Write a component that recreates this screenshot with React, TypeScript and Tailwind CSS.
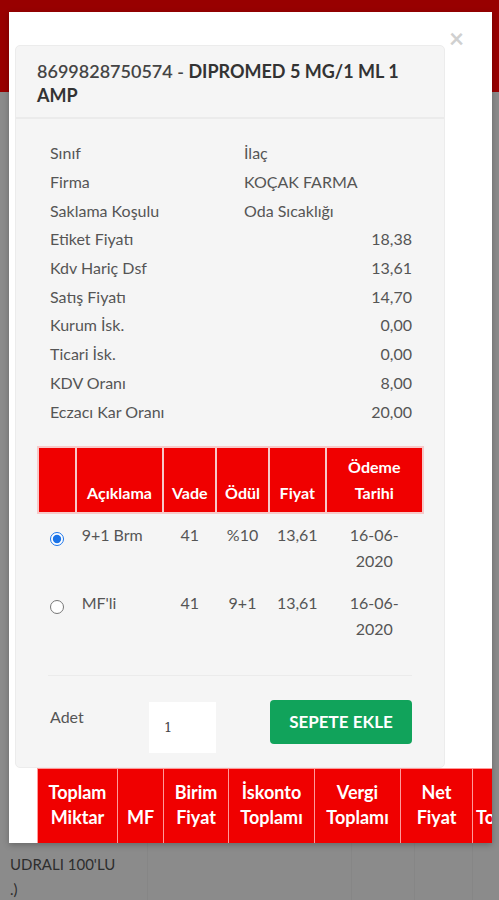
import React from "react";

const info: [string, string, boolean][] = [
  ["Sınıf", "İlaç", false],
  ["Firma", "KOÇAK FARMA", false],
  ["Saklama Koşulu", "Oda Sıcaklığı", false],
  ["Etiket Fiyatı", "18,38", true],
  ["Kdv Hariç Dsf", "13,61", true],
  ["Satış Fiyatı", "14,70", true],
  ["Kurum İsk.", "0,00", true],
  ["Ticari İsk.", "0,00", true],
  ["KDV Oranı", "8,00", true],
  ["Eczacı Kar Oranı", "20,00", true],
];

const campaigns = [
  { id: 1, desc: "9+1 Brm", vade: "41", odul: "%10", fiyat: "13,61", tarih: ["16-06-", "2020"], checked: true },
  { id: 2, desc: "MF'li", vade: "41", odul: "9+1", fiyat: "13,61", tarih: ["16-06-", "2020"], checked: false },
];

const totals: [string, string, number][] = [
  ["Toplam", "Miktar", 80],
  ["", "MF", 46],
  ["Birim", "Fiyat", 65],
  ["İskonto", "Toplamı", 86],
  ["Vergi", "Toplamı", 86],
  ["Net", "Fiyat", 72],
  ["", "Toplam", 0],
];

export default function App() {
  return (
    <div className="relative w-full h-[900px] overflow-hidden bg-[#8b8b8b] font-['Lato',sans-serif]">
      {/* page behind the overlay */}
      <div className="h-[92px] bg-[#980000]" />
      <div className="flex h-[808px]">
        <div className="w-[148px] pl-[10px] pt-[760px] text-[15px] leading-[25px] text-[#2e2e2e] border-r border-[#868686]">
          <div>UDRALI 100'LU</div>
          <div>.)</div>
        </div>
        <div className="w-[204px] border-r border-[#868686]" />
        <div className="w-[63px] border-r border-[#868686]" />
        <div className="w-[58px] border-r border-[#868686]" />
      </div>

      {/* modal */}
      <div className="absolute left-[9px] top-[12px] w-[483px] h-[831px] bg-white overflow-hidden shadow-[0_2px_6px_rgba(0,0,0,0.25)]">
        <button className="absolute right-[28px] top-[13px] text-[26px] leading-none font-bold text-[#d0d0d0]">×</button>

        <div className="pl-[6px] pt-[33px]">
          <div className="w-[430px] bg-[#f5f5f5] border border-[#ececec] rounded-[5px]">
            <div className="px-[21px] pt-[13px] pb-[10px] border-b-2 border-[#ebebeb] text-[18px] leading-[24px] text-[#333]">
              <span className="font-semibold text-[#444]">8699828750574 - </span>
              <span className="font-bold">DIPROMED 5 MG/1 ML 1 AMP</span>
            </div>

            <div className="pt-[20px] px-[21px] pb-[14px]">
              <div className="pl-[13px] pr-[11px] text-[16px] text-[#555]">
                {info.map(([label, value, num]) => (
                  <div key={label} className="flex h-[28.7px] items-center">
                    <div className="w-[194px] shrink-0">{label}</div>
                    <div className={num ? "flex-1 text-right" : "flex-1"}>{value}</div>
                  </div>
                ))}
              </div>

              <table className="mt-[20px] w-[387px] border-collapse text-[16px]">
                <thead>
                  <tr className="bg-[#f00000] text-white font-bold leading-[26px]">
                    <th className="w-[38px] border-2 border-[#f7c9c9]" />
                    <th className="w-[88px] border-2 border-[#f7c9c9] align-bottom pb-[6px] px-1">Açıklama</th>
                    <th className="w-[53px] border-2 border-[#f7c9c9] align-bottom pb-[6px]">Vade</th>
                    <th className="w-[53px] border-2 border-[#f7c9c9] align-bottom pb-[6px]">Ödül</th>
                    <th className="w-[57px] border-2 border-[#f7c9c9] align-bottom pb-[6px]">Fiyat</th>
                    <th className="w-[98px] border-2 border-[#f7c9c9] align-bottom pb-[6px] pt-[6px]">
                      Ödeme
                      <br />
                      Tarihi
                    </th>
                  </tr>
                </thead>
                <tbody className="text-[#555] leading-[26px]">
                  {campaigns.map((c) => (
                    <tr key={c.id}>
                      <td className="align-top pt-[10px] pb-[8px] text-center">
                        <input
                          type="radio"
                          name="kampanya"
                          defaultChecked={c.checked}
                          className="w-[14px] h-[14px] align-middle accent-[#1a73e8]"
                        />
                      </td>
                      <td className="align-top pt-[8px] pl-[6px]">{c.desc}</td>
                      <td className="align-top pt-[8px] text-center">{c.vade}</td>
                      <td className="align-top pt-[8px] text-center">{c.odul}</td>
                      <td className="align-top pt-[8px] text-center">{c.fiyat}</td>
                      <td className="align-top pt-[8px] pb-[8px] text-center">
                        {c.tarih[0]}
                        <br />
                        {c.tarih[1]}
                      </td>
                    </tr>
                  ))}
                </tbody>
              </table>

              <div className="mt-[25px] mx-[11px] border-t border-[#ebebeb]" />

              <div className="flex items-start pt-[26px] pl-[13px]">
                <div className="w-[99px] pt-[3px] text-[16px] text-[#555]">Adet</div>
                <div className="w-[67px] h-[51px] bg-white flex items-center pl-[15px] font-['DejaVu_Serif',serif] text-[13px] text-[#444]">
                  1
                </div>
                <button className="ml-[54px] -mt-[2px] w-[142px] h-[44px] rounded-[4px] bg-[#11a35b] text-white font-bold text-[17px]">
                  SEPETE EKLE
                </button>
              </div>
            </div>
          </div>

          <table className="ml-[22px] border-collapse text-[18px]">
            <thead>
              <tr className="bg-[#f00000] text-white font-bold leading-[25px]">
                {totals.map(([a, b, w], i) => (
                  <th
                    key={i}
                    style={{ minWidth: w }}
                    className="h-[75px] border border-[#ff9a9a] align-bottom pb-[13px] px-[3px] text-center"
                  >
                    {a}
                    {a && <br />}
                    {b}
                  </th>
                ))}
              </tr>
            </thead>
          </table>
        </div>
      </div>
    </div>
  );
}
